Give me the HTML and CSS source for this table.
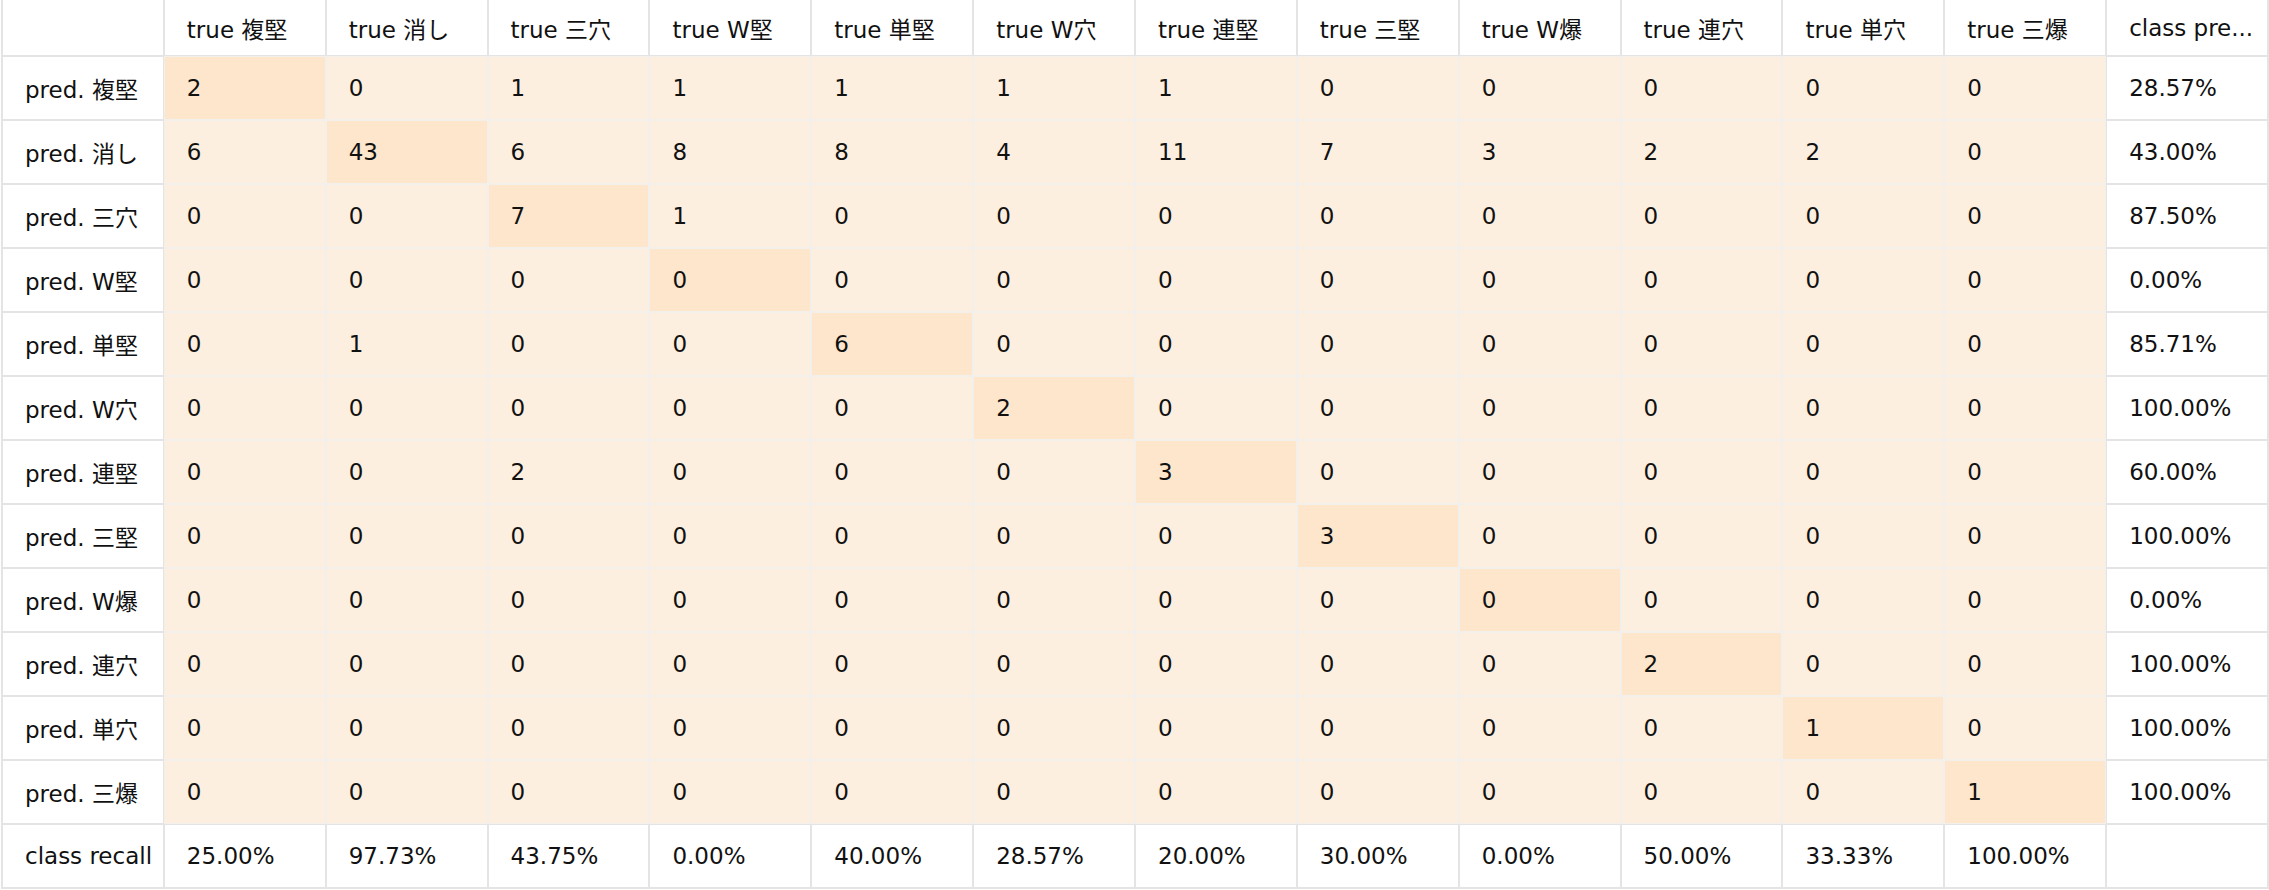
FILE: index.html
```html
<!DOCTYPE html>
<html lang="ja">
<head>
<meta charset="utf-8">
<title>Confusion matrix</title>
<link rel="stylesheet" href="styles.css">
</head>
<body>
<div class="matrix">
  <div class="c"></div>
  <div class="c">true 複堅</div><div class="c">true 消し</div><div class="c">true 三穴</div><div class="c">true W堅</div><div class="c">true 単堅</div><div class="c">true W穴</div><div class="c">true 連堅</div><div class="c">true 三堅</div><div class="c">true W爆</div><div class="c">true 連穴</div><div class="c">true 単穴</div><div class="c">true 三爆</div><div class="c" title="class precision">class pre...</div>

  <div class="c">pred. 複堅</div>
  <div class="c h d">2</div><div class="c h">0</div><div class="c h">1</div><div class="c h">1</div><div class="c h">1</div><div class="c h">1</div><div class="c h">1</div><div class="c h">0</div><div class="c h">0</div><div class="c h">0</div><div class="c h">0</div><div class="c h">0</div>
  <div class="c">28.57%</div>

  <div class="c">pred. 消し</div>
  <div class="c h">6</div><div class="c h d">43</div><div class="c h">6</div><div class="c h">8</div><div class="c h">8</div><div class="c h">4</div><div class="c h">11</div><div class="c h">7</div><div class="c h">3</div><div class="c h">2</div><div class="c h">2</div><div class="c h">0</div>
  <div class="c">43.00%</div>

  <div class="c">pred. 三穴</div>
  <div class="c h">0</div><div class="c h">0</div><div class="c h d">7</div><div class="c h">1</div><div class="c h">0</div><div class="c h">0</div><div class="c h">0</div><div class="c h">0</div><div class="c h">0</div><div class="c h">0</div><div class="c h">0</div><div class="c h">0</div>
  <div class="c">87.50%</div>

  <div class="c">pred. W堅</div>
  <div class="c h">0</div><div class="c h">0</div><div class="c h">0</div><div class="c h d">0</div><div class="c h">0</div><div class="c h">0</div><div class="c h">0</div><div class="c h">0</div><div class="c h">0</div><div class="c h">0</div><div class="c h">0</div><div class="c h">0</div>
  <div class="c">0.00%</div>

  <div class="c">pred. 単堅</div>
  <div class="c h">0</div><div class="c h">1</div><div class="c h">0</div><div class="c h">0</div><div class="c h d">6</div><div class="c h">0</div><div class="c h">0</div><div class="c h">0</div><div class="c h">0</div><div class="c h">0</div><div class="c h">0</div><div class="c h">0</div>
  <div class="c">85.71%</div>

  <div class="c">pred. W穴</div>
  <div class="c h">0</div><div class="c h">0</div><div class="c h">0</div><div class="c h">0</div><div class="c h">0</div><div class="c h d">2</div><div class="c h">0</div><div class="c h">0</div><div class="c h">0</div><div class="c h">0</div><div class="c h">0</div><div class="c h">0</div>
  <div class="c">100.00%</div>

  <div class="c">pred. 連堅</div>
  <div class="c h">0</div><div class="c h">0</div><div class="c h">2</div><div class="c h">0</div><div class="c h">0</div><div class="c h">0</div><div class="c h d">3</div><div class="c h">0</div><div class="c h">0</div><div class="c h">0</div><div class="c h">0</div><div class="c h">0</div>
  <div class="c">60.00%</div>

  <div class="c">pred. 三堅</div>
  <div class="c h">0</div><div class="c h">0</div><div class="c h">0</div><div class="c h">0</div><div class="c h">0</div><div class="c h">0</div><div class="c h">0</div><div class="c h d">3</div><div class="c h">0</div><div class="c h">0</div><div class="c h">0</div><div class="c h">0</div>
  <div class="c">100.00%</div>

  <div class="c">pred. W爆</div>
  <div class="c h">0</div><div class="c h">0</div><div class="c h">0</div><div class="c h">0</div><div class="c h">0</div><div class="c h">0</div><div class="c h">0</div><div class="c h">0</div><div class="c h d">0</div><div class="c h">0</div><div class="c h">0</div><div class="c h">0</div>
  <div class="c">0.00%</div>

  <div class="c">pred. 連穴</div>
  <div class="c h">0</div><div class="c h">0</div><div class="c h">0</div><div class="c h">0</div><div class="c h">0</div><div class="c h">0</div><div class="c h">0</div><div class="c h">0</div><div class="c h">0</div><div class="c h d">2</div><div class="c h">0</div><div class="c h">0</div>
  <div class="c">100.00%</div>

  <div class="c">pred. 単穴</div>
  <div class="c h">0</div><div class="c h">0</div><div class="c h">0</div><div class="c h">0</div><div class="c h">0</div><div class="c h">0</div><div class="c h">0</div><div class="c h">0</div><div class="c h">0</div><div class="c h">0</div><div class="c h d">1</div><div class="c h">0</div>
  <div class="c">100.00%</div>

  <div class="c">pred. 三爆</div>
  <div class="c h">0</div><div class="c h">0</div><div class="c h">0</div><div class="c h">0</div><div class="c h">0</div><div class="c h">0</div><div class="c h">0</div><div class="c h">0</div><div class="c h">0</div><div class="c h">0</div><div class="c h">0</div><div class="c h d">1</div>
  <div class="c">100.00%</div>

  <div class="c">class recall</div>
  <div class="c">25.00%</div><div class="c">97.73%</div><div class="c">43.75%</div><div class="c">0.00%</div><div class="c">40.00%</div><div class="c">28.57%</div><div class="c">20.00%</div><div class="c">30.00%</div><div class="c">0.00%</div><div class="c">50.00%</div><div class="c">33.33%</div><div class="c">100.00%</div>
  <div class="c"></div>
</div>
</body>
</html>
```

FILE: styles.css
```css
html, body {
  margin: 0;
  padding: 0;
  background: #ffffff;
}

body {
  font-family: "DejaVu Sans", "Noto Sans CJK JP", sans-serif;
  font-size: 23px;
  color: #111111;
}

.matrix {
  display: grid;
  grid-template-columns: repeat(14, 1fr);
  grid-template-rows: 55px repeat(13, 62px);
  gap: 2px;
  width: 2268px;
  box-sizing: border-box;
  margin-left: 1px;
  padding: 0 2px 2px 2px;
  background: #e4e4e4;
}

.c {
  background: #ffffff;
  display: flex;
  align-items: center;
  padding-left: 22px;
  white-space: nowrap;
  overflow: hidden;
  min-width: 0;
}

.h {
  background: #fcefdf;
  box-shadow: 0 0 0 1px #f3efeb;
}

.d {
  background: #fde6cb;
}
```
